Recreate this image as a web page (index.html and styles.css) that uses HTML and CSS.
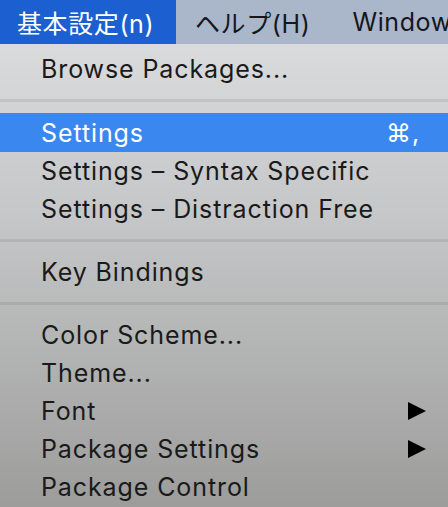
FILE: index.html
```html
<!DOCTYPE html>
<html lang="ja">
<head>
  <meta charset="UTF-8">
  <title>基本設定</title>
  <meta name="viewport" content="width=device-width, initial-scale=1.0">
  <link rel="stylesheet" href="styles.css">
</head>
<body>
  <nav class="menubar">
    <span class="menubar-item active">基本設定(n)</span>
    <span class="menubar-item">ヘルプ(H)</span>
    <span class="menubar-item">Window</span>
  </nav>

  <ul class="menu">
    <li class="item">Browse Packages...</li>
    <li class="sep"></li>
    <li class="item selected"><span>Settings</span><span class="key">⌘,</span></li>
    <li class="item">Settings – Syntax Specific</li>
    <li class="item">Settings – Distraction Free</li>
    <li class="sep"></li>
    <li class="item">Key Bindings</li>
    <li class="sep"></li>
    <li class="item">Color Scheme...</li>
    <li class="item">Theme...</li>
    <li class="item"><span>Font</span><span class="arrow"></span></li>
    <li class="item"><span>Package Settings</span><span class="arrow"></span></li>
    <li class="item">Package Control</li>
  </ul>
</body>
</html>
```

FILE: styles.css
```css
body {
  margin: 0;
  width: 448px;
  height: 507px;
  overflow: hidden;
  font-family: Inter, 'Noto Sans CJK JP', sans-serif;
  background: linear-gradient(#dfe0e2, #c4c5c6 45%, #9c9d9b);
}
.menubar {
  display: flex;
  height: 44px;
  overflow: hidden;
  background: #aab6ca;
  white-space: nowrap;
}
.menubar-item {
  display: flex;
  flex-shrink: 0;
  align-items: center;
  padding: 0 42px 0 0;
  font-size: 25px;
  letter-spacing: 0.6px;
  color: #15171c;
}
.menubar-item.active {
  width: 176px;
  box-sizing: border-box;
  padding: 0 0 0 17px;
  margin-right: 19px;
  background: #1c5fd0;
  color: #fff;
}
.menu {
  list-style: none;
  margin: 0;
  padding: 6px 0 0;
}
.item {
  display: flex;
  align-items: center;
  justify-content: space-between;
  height: 38px;
  padding: 0 22px 0 41px;
  font-size: 25px;
  letter-spacing: 0.9px;
  color: #1a1a1a;
}
.item.selected {
  height: 39px;
  background: #3a87f0;
  color: #fff;
}
.key {
  padding-right: 6px;
}
.arrow {
  width: 0;
  height: 0;
  border-top: 9.5px solid transparent;
  border-bottom: 9.5px solid transparent;
  border-left: 18px solid #000;
}
.sep {
  height: 3px;
  margin: 11px 0;
  background: rgba(0, 0, 0, 0.08);
}
```
